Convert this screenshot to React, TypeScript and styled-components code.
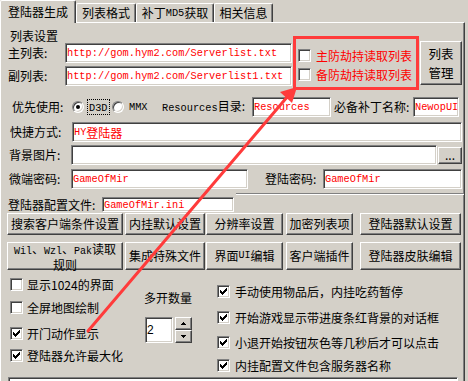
import React from "react";
import styled, { createGlobalStyle } from "styled-components";

const CJK = `"Noto Sans CJK SC", "Liberation Sans", sans-serif`;
const MONO = `"Liberation Mono", "Noto Sans CJK SC", monospace`;

const GlobalStyle = createGlobalStyle`
  html, body { margin: 0; padding: 0; background: #d4d0c8; }
  body { font-family: ${CJK}; font-size: 12px; color: #000; }
  * { box-sizing: border-box; }
`;

const Window = styled.div`
  position: relative;
  width: 468px;
  height: 381px;
  overflow: hidden;
  background: #d4d0c8;
  display: flex;
  flex-direction: column;
`;

const TabStrip = styled.div`
  display: flex;
  align-items: flex-end;
  height: 22px;
  flex: none;
  position: relative;
  z-index: 2;
`;

const Tab = styled.div<{ $active?: boolean; $w: number }>`
  width: ${(p) => p.$w}px;
  height: ${(p) => (p.$active ? 23 : 19)}px;
  margin-bottom: ${(p) => (p.$active ? -1 : 0)}px;
  background: #d4d0c8;
  border-top: 1px solid #fff;
  border-left: 1px solid #fff;
  border-right: 1px solid #404040;
  box-shadow: inset -1px 0 #808080;
  border-radius: 2px 2px 0 0;
  display: flex;
  align-items: center;
  justify-content: center;
  font-size: 12px;
  line-height: 14px;
  white-space: nowrap;
`;

const Panel = styled.div`
  flex: 1;
  width: 465px;
  border-top: 1px solid #fff;
  border-left: 1px solid #fff;
  border-right: 1px solid #404040;
  box-shadow: inset -1px 0 #808080;
  padding: 5px 0 0 6px;
  display: flex;
  flex-direction: column;
  overflow: hidden;
`;

const Mono = styled.span<{ $size?: number }>`
  font-family: ${MONO};
  font-size: ${(p) => p.$size ?? 10.3}px;
`;

const Han = styled.span`
  font-family: ${CJK};
  font-size: 12px;
`;

const TopGroup = styled.div`
  display: flex;
  align-items: flex-start;
  height: 62px;
  flex: none;
`;

const ListColumn = styled.div`
  width: 286px;
  display: flex;
  flex-direction: column;
`;

const GroupTitle = styled.div`
  height: 15px;
  line-height: 15px;
  padding-left: 3px;
`;

const FieldRow = styled.div<{ $mt?: number; $h?: number }>`
  display: flex;
  align-items: center;
  flex: none;
  height: ${(p) => p.$h ?? 20}px;
  margin-top: ${(p) => p.$mt ?? 0}px;
  white-space: nowrap;
`;

const FieldLabel = styled.div<{ $w: number; $pl?: number }>`
  width: ${(p) => p.$w}px;
  padding-left: ${(p) => p.$pl ?? 0}px;
  flex: none;
  line-height: 14px;
  white-space: nowrap;
`;

const TextBox = styled.div<{ $w: number; $h?: number; $ink?: string }>`
  width: ${(p) => p.$w}px;
  height: ${(p) => p.$h ?? 20}px;
  flex: none;
  background: #fff;
  border: 1px solid;
  border-color: #808080 #fff #fff #808080;
  box-shadow: inset 1px 1px #404040, inset -1px -1px #d4d0c8;
  padding: 0 0 0 1px;
  display: flex;
  align-items: center;
  color: ${(p) => p.$ink ?? "#f00"};
  font-family: ${MONO};
  font-size: 10.3px;
  white-space: nowrap;
  overflow: hidden;
`;

const HighlightBox = styled.div`
  width: 126px;
  height: 54px;
  margin-top: 8px;
  border: 3px solid #ff3b3b;
  padding: 10px 0 0 2px;
  display: flex;
  flex-direction: column;
  flex: none;
`;

const CheckRow = styled.div<{ $mt?: number; $gap?: number; $red?: boolean }>`
  display: flex;
  align-items: center;
  height: 13px;
  flex: none;
  margin-top: ${(p) => p.$mt ?? 0}px;
  gap: ${(p) => p.$gap ?? 4}px;
  color: ${(p) => (p.$red ? "#f00" : "#000")};
  line-height: 13px;
  white-space: nowrap;
`;

const CheckBoxBox = styled.span`
  flex: none;
  width: 13px;
  height: 13px;
  background: #fff;
  border: 1px solid;
  border-color: #808080 #fff #fff #808080;
  box-shadow: inset 1px 1px #404040, inset -1px -1px #d4d0c8;
  display: flex;
  align-items: center;
  justify-content: center;
`;

const Check = ({ on }: { on?: boolean }) => (
  <CheckBoxBox>
    {on && (
      <svg width="9" height="9" viewBox="0 0 9 9" shapeRendering="crispEdges">
        <path
          d="M1 3h1v3H1zM2 4h1v3H2zM3 5h1v3H3zM4 4h1v3H4zM5 3h1v3H5zM6 2h1v3H6zM7 1h1v3H7z"
          fill="#000"
        />
      </svg>
    )}
  </CheckBoxBox>
);

const RadioCircle = styled.span<{ $on?: boolean }>`
  flex: none;
  width: 12px;
  height: 12px;
  border-radius: 50%;
  background: #fff;
  border: 1px solid;
  border-color: #808080 #fff #fff #808080;
  box-shadow: inset 1px 1px #404040, inset -1px -1px #d4d0c8;
  display: flex;
  align-items: center;
  justify-content: center;
  &::after {
    content: "";
    display: ${(p) => (p.$on ? "block" : "none")};
    width: 4px;
    height: 4px;
    border-radius: 50%;
    background: #000;
  }
`;

const RadioText = styled.div<{ $w: number; $pl?: number }>`
  width: ${(p) => p.$w}px;
  padding-left: ${(p) => p.$pl ?? 0}px;
  flex: none;
  display: flex;
  align-items: center;
`;

const FocusRect = styled.span`
  border: 1px dotted #000;
  padding: 0 1px;
  line-height: 11px;
`;

const Btn = styled.button<{ $w: number; $h: number; $ml?: number; $mt?: number; $size?: number; $lh?: number }>`
  width: ${(p) => p.$w}px;
  height: ${(p) => p.$h}px;
  margin: ${(p) => p.$mt ?? 0}px 0 0 ${(p) => p.$ml ?? 0}px;
  flex: none;
  padding: 0;
  background: #d4d0c8;
  color: #000;
  border: 1px solid;
  border-color: #fff #404040 #404040 #fff;
  box-shadow: inset -1px -1px #808080;
  border-radius: 0;
  font-family: ${CJK};
  font-size: ${(p) => p.$size ?? 12}px;
  line-height: ${(p) => p.$lh ?? 14}px;
  display: flex;
  align-items: center;
  justify-content: center;
  text-align: center;
  white-space: nowrap;
`;

const Etch = styled.div<{ $ml: number; $mt: number }>`
  flex: none;
  margin: ${(p) => p.$mt}px 0 0 ${(p) => p.$ml}px;
  height: 2px;
  border-top: 1px solid #808080;
  border-bottom: 1px solid #fff;
`;

const ButtonRow = styled.div<{ $mt: number; $h: number }>`
  display: flex;
  flex: none;
  height: ${(p) => p.$h}px;
  margin-top: ${(p) => p.$mt}px;
`;

const BottomArea = styled.div`
  display: flex;
  flex: none;
  height: 107px;
`;

const OptionColumn = styled.div<{ $w?: number; $pl?: number }>`
  display: flex;
  flex-direction: column;
  flex: none;
  width: ${(p) => (p.$w ? `${p.$w}px` : "auto")};
  padding-left: ${(p) => p.$pl ?? 0}px;
`;

const Caption = styled.div<{ $mt: number }>`
  margin-top: ${(p) => p.$mt}px;
  height: 12px;
  line-height: 12px;
  white-space: nowrap;
`;

const Spin = styled.div`
  display: flex;
  margin: 13px 0 0 1px;
  height: 26px;
`;

const SpinButtons = styled.div`
  display: flex;
  flex-direction: column;
  margin-left: 2px;
`;

const SpinBtn = styled.div`
  width: 17px;
  height: 13px;
  background: #d4d0c8;
  border: 1px solid;
  border-color: #fff #404040 #404040 #fff;
  box-shadow: inset -1px -1px #808080;
  display: flex;
  align-items: center;
  justify-content: center;
`;

const SpinValue = styled.span`
  font-family: "Liberation Sans", sans-serif;
  font-size: 12px;
  color: #000;
`;

const BottomBox = styled.div`
  flex: none;
  margin-left: 1px;
  width: 450px;
  height: 20px;
  background: #fff;
  border: 1px solid;
  border-color: #808080 #fff #fff #808080;
  box-shadow: inset 1px 1px #404040;
`;

const Overlay = styled.svg`
  position: absolute;
  left: 0;
  top: 0;
  pointer-events: none;
  z-index: 10;
`;

const Arrow = ({ up }: { up?: boolean }) => (
  <svg width="7" height="4" viewBox="0 0 7 4" shapeRendering="crispEdges">
    <path d={up ? "M3 0h1v1H3zM2 1h3v1H2zM1 2h5v1H1z" : "M1 0h5v1H1zM2 1h3v1H2zM3 2h1v1H3z"} fill="#000" />
  </svg>
);

export default function App() {
  return (
    <>
      <GlobalStyle />
      <Window>
        <TabStrip>
          <Tab $active $w={76}>登陆器生成</Tab>
          <Tab $w={60}>列表格式</Tab>
          <Tab $w={78}>
            补丁<Mono>MD5</Mono>获取
          </Tab>
          <Tab $w={59}>相关信息</Tab>
        </TabStrip>
        <Panel>
          <TopGroup>
            <ListColumn>
              <GroupTitle>列表设置</GroupTitle>
              <FieldRow>
                <FieldLabel $w={58} $pl={1}>主列表:</FieldLabel>
                <TextBox $w={227}>http://gom.hym2.com/Serverlist.txt</TextBox>
              </FieldRow>
              <FieldRow $mt={3}>
                <FieldLabel $w={58} $pl={1}>副列表:</FieldLabel>
                <TextBox $w={227}>http://gom.hym2.com/Serverlist1.txt</TextBox>
              </FieldRow>
            </ListColumn>
            <HighlightBox>
              <CheckRow $gap={5} $red>
                <Check />
                主防劫持读取列表
              </CheckRow>
              <CheckRow $gap={5} $mt={6} $red>
                <Check />
                备防劫持读取列表
              </CheckRow>
            </HighlightBox>
            <Btn $w={42} $h={44} $ml={1} $mt={13} $size={12.5} $lh={19}>
              列表
              <br />
              管理
            </Btn>
          </TopGroup>

          <FieldRow $mt={7}>
            <FieldLabel $w={65} $pl={5}>优先使用:</FieldLabel>
            <RadioCircle $on />
            <RadioText $w={28} $pl={3}>
              <FocusRect>
                <Mono>D3D</Mono>
              </FocusRect>
            </RadioText>
            <RadioCircle />
            <RadioText $w={38} $pl={5}>
              <Mono>MMX</Mono>
            </RadioText>
            <FieldLabel $w={90}>
              <Mono>Resources</Mono>目录:
            </FieldLabel>
            <TextBox $w={79}>Resources</TextBox>
            <FieldLabel $w={82} $pl={3}>必备补丁名称:</FieldLabel>
            <TextBox $w={46}>NewopUI</TextBox>
          </FieldRow>

          <FieldRow $mt={5}>
            <FieldLabel $w={65} $pl={3}>快捷方式:</FieldLabel>
            <TextBox $w={390}>
              HY<Han>登陆器</Han>
            </TextBox>
          </FieldRow>

          <FieldRow $mt={3}>
            <FieldLabel $w={64} $pl={2}>背景图片:</FieldLabel>
            <TextBox $w={366} />
            <Btn $w={24} $h={17} $ml={1} $lh={10}>...</Btn>
          </FieldRow>

          <FieldRow $mt={4}>
            <FieldLabel $w={64} $pl={2}>微端密码:</FieldLabel>
            <TextBox $w={177}>GameOfMir</TextBox>
            <FieldLabel $w={75} $pl={17}>登陆密码:</FieldLabel>
            <TextBox $w={139}>GameOfMir</TextBox>
          </FieldRow>

          <Etch $ml={229} $mt={4} />

          <FieldRow $mt={2} $h={15}>
            <FieldLabel $w={95} $pl={1}>登陆器配置文件:</FieldLabel>
            <TextBox $w={132} $h={15}>GameOfMir.ini</TextBox>
          </FieldRow>

          <ButtonRow $mt={1} $h={22}>
            <Btn $w={116} $h={22}>搜索客户端条件设置</Btn>
            <Btn $w={80} $h={22} $ml={2}>内挂默认设置</Btn>
            <Btn $w={77} $h={22} $ml={1}>分辨率设置</Btn>
            <Btn $w={67} $h={22} $ml={3}>加密列表项</Btn>
            <Btn $w={101} $h={22} $ml={7}>登陆器默认设置</Btn>
          </ButtonRow>

          <ButtonRow $mt={7} $h={28}>
            <Btn $w={116} $h={28} $lh={13}>
              <span>
                <Mono $size={10}>Wil</Mono>、<Mono $size={10}>Wzl</Mono>、<Mono $size={10}>Pak</Mono>读取
                <br />
                规则
              </span>
            </Btn>
            <Btn $w={80} $h={28} $ml={2}>集成特殊文件</Btn>
            <Btn $w={77} $h={28} $ml={1}>
              界面<Mono $size={10}>UI</Mono>编辑
            </Btn>
            <Btn $w={67} $h={28} $ml={3}>客户端插件</Btn>
            <Btn $w={101} $h={28} $ml={7}>登陆器皮肤编辑</Btn>
          </ButtonRow>

          <BottomArea>
            <OptionColumn $w={137} $pl={3}>
              <CheckRow $mt={8}>
                <Check />
                显示1024的界面
              </CheckRow>
              <CheckRow $mt={10}>
                <Check />
                全屏地图绘制
              </CheckRow>
              <CheckRow $mt={13}>
                <Check on />
                开门动作显示
              </CheckRow>
              <CheckRow $mt={9}>
                <Check on />
                登陆器允许最大化
              </CheckRow>
            </OptionColumn>
            <OptionColumn $w={73}>
              <Caption $mt={22}>多开数量</Caption>
              <Spin>
                <TextBox $w={28} $h={26} $ink="#000">
                  <SpinValue>2</SpinValue>
                </TextBox>
                <SpinButtons>
                  <SpinBtn>
                    <Arrow up />
                  </SpinBtn>
                  <SpinBtn>
                    <Arrow />
                  </SpinBtn>
                </SpinButtons>
              </Spin>
            </OptionColumn>
            <OptionColumn>
              <CheckRow $mt={15} $gap={5}>
                <Check on />
                手动使用物品后，内挂吃药暂停
              </CheckRow>
              <CheckRow $mt={13} $gap={5}>
                <Check on />
                开始游戏显示带进度条红背景的对话框
              </CheckRow>
              <CheckRow $mt={12} $gap={5}>
                <Check on />
                小退开始按钮灰色等几秒后才可以点击
              </CheckRow>
              <CheckRow $mt={10} $gap={5}>
                <Check on />
                内挂配置文件包含服务器名称
              </CheckRow>
            </OptionColumn>
          </BottomArea>

          <BottomBox />
        </Panel>

        <Overlay width="468" height="381" viewBox="0 0 468 381">
          <line x1="88" y1="331" x2="288" y2="96" stroke="#ff3b3b" strokeWidth="3" strokeLinecap="round" />
          <polygon points="297,87 280,92 292,103" fill="#ff3b3b" />
        </Overlay>
      </Window>
    </>
  );
}
